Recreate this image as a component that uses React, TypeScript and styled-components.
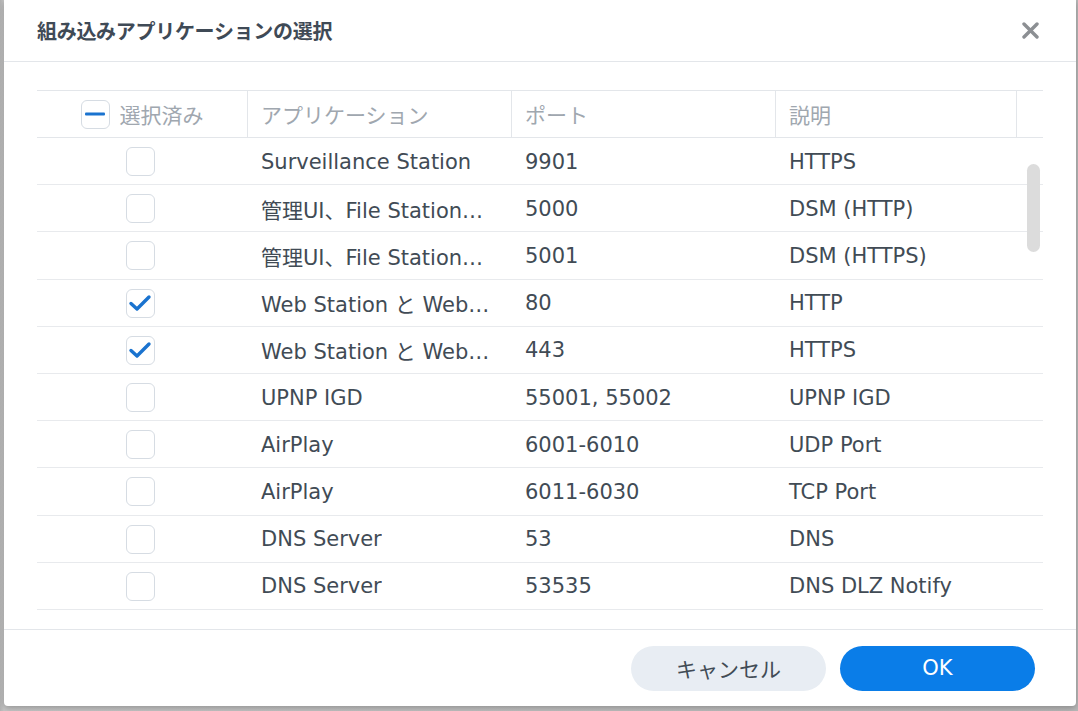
import styled, { createGlobalStyle } from 'styled-components';

const GlobalStyle = createGlobalStyle`
  html, body {
    margin: 0;
    padding: 0;
    height: 100%;
    overflow: hidden;
    background: #b9bcbf;
  }
  * {
    box-sizing: border-box;
  }
`;

const FONT = `"DejaVu Sans", "Noto Sans CJK JP", sans-serif`;

const Backdrop = styled.div`
  width: 1078px;
  height: 711px;
  padding: 0 2px 5px 4px;
  background: linear-gradient(90deg, #b3b3b3 0, #c6c6c6 4px, #b8b8b8 100%);
  font-family: ${FONT};
`;

const Dialog = styled.div`
  height: 706px;
  background: #fff;
  border-radius: 0 0 4px 4px;
  display: flex;
  flex-direction: column;
  box-shadow: 0 2px 6px rgba(0, 0, 0, 0.25);
`;

const TitleBar = styled.div`
  height: 62px;
  flex-shrink: 0;
  display: flex;
  align-items: center;
  justify-content: space-between;
  padding: 0 37px 0 33px;
  border-bottom: 1px solid #e3e6ea;
`;

const Title = styled.div`
  font-family: "Noto Sans CJK JP", sans-serif;
  font-size: 20px;
  font-weight: 700;
  color: #3f4a56;
  letter-spacing: -0.3px;
`;

const CloseButton = styled.button`
  width: 18px;
  height: 18px;
  border: none;
  padding: 0;
  background: none;
  display: flex;
  align-items: center;
  justify-content: center;
  cursor: pointer;
`;

const Body = styled.div`
  flex: 1;
  padding: 28px 33px 0 33px;
  position: relative;
`;

const Grid = styled.div`
  display: grid;
  grid-template-columns: 210px 264px 264px 241px 1fr;
`;

const HeadRow = styled(Grid)`
  height: 48px;
  border-top: 1px solid #e3e6ea;
  border-bottom: 1px solid #e3e6ea;
`;

const HeadCell = styled.div<{ $first?: boolean }>`
  display: flex;
  align-items: center;
  justify-content: ${({ $first }) => ($first ? 'center' : 'flex-start')};
  padding-left: ${({ $first }) => ($first ? '0' : '13px')};
  border-left: ${({ $first }) => ($first ? 'none' : '1px solid #e3e6ea')};
  gap: 10px;
  font-size: 21px;
  color: #a0a7af;
`;

const Row = styled(Grid)`
  height: 47.2px;
  border-bottom: 1px solid #e8eaed;
`;

const Cell = styled.div<{ $center?: boolean }>`
  display: flex;
  align-items: center;
  justify-content: ${({ $center }) => ($center ? 'center' : 'flex-start')};
  padding: 1px 18px 0 14px;
  font-size: 21px;
  color: #414b55;
  min-width: 0;
`;

const Ellipsis = styled.span`
  white-space: nowrap;
  overflow: hidden;
  text-overflow: ellipsis;
`;

const Box = styled.div`
  width: 29px;
  height: 29px;
  border: 1.5px solid #d6dce3;
  border-radius: 6px;
  background: #fff;
  display: flex;
  align-items: center;
  justify-content: center;
  flex-shrink: 0;
`;

const Scrollbar = styled.div`
  position: absolute;
  right: 36px;
  top: 102px;
  width: 13px;
  height: 88px;
  border-radius: 7px;
  background: #dcdcdc;
`;

const Footer = styled.div`
  height: 77px;
  flex-shrink: 0;
  border-top: 1px solid #e3e6ea;
  display: flex;
  align-items: center;
  justify-content: flex-end;
  gap: 14px;
  padding: 0 41px 0 0;
`;

const Button = styled.button<{ $primary?: boolean }>`
  width: 195px;
  height: 45px;
  border: none;
  border-radius: 23px;
  font-family: ${FONT};
  font-size: 21px;
  background: ${({ $primary }) => ($primary ? '#0a7de8' : '#e8edf3')};
  color: ${({ $primary }) => ($primary ? '#ffffff' : '#414b55')};
  cursor: pointer;
`;

const rows = [
  { checked: false, app: 'Surveillance Station', port: '9901', desc: 'HTTPS' },
  { checked: false, app: '管理UI、File Station、Audio Station', port: '5000', desc: 'DSM (HTTP)' },
  { checked: false, app: '管理UI、File Station、Audio Station', port: '5001', desc: 'DSM (HTTPS)' },
  { checked: true, app: 'Web Station と WebDAV Server', port: '80', desc: 'HTTP' },
  { checked: true, app: 'Web Station と WebDAV Server', port: '443', desc: 'HTTPS' },
  { checked: false, app: 'UPNP IGD', port: '55001, 55002', desc: 'UPNP IGD' },
  { checked: false, app: 'AirPlay', port: '6001-6010', desc: 'UDP Port' },
  { checked: false, app: 'AirPlay', port: '6011-6030', desc: 'TCP Port' },
  { checked: false, app: 'DNS Server', port: '53', desc: 'DNS' },
  { checked: false, app: 'DNS Server', port: '53535', desc: 'DNS DLZ Notify' },
];

const Check = () => (
  <svg width="24" height="20" viewBox="0 0 24 20">
    <path d="M3 10.5 L9 16 L21 4" fill="none" stroke="#1a73cf" strokeWidth="3.4" strokeLinecap="round" strokeLinejoin="round" />
  </svg>
);

const Minus = () => (
  <svg width="20" height="6" viewBox="0 0 20 6">
    <rect x="0" y="1.5" width="20" height="3" rx="1" fill="#1a73cf" />
  </svg>
);

const App = () => {
  return (
    <Backdrop>
      <GlobalStyle />
      <Dialog>
        <TitleBar>
          <Title>組み込みアプリケーションの選択</Title>
          <CloseButton>
            <svg width="17" height="17" viewBox="0 0 17 17">
              <path d="M2 2 L15 15 M15 2 L2 15" stroke="#8c8f93" strokeWidth="3.4" strokeLinecap="round" />
            </svg>
          </CloseButton>
        </TitleBar>
        <Body>
          <HeadRow>
            <HeadCell $first>
              <Box>
                <Minus />
              </Box>
              選択済み
            </HeadCell>
            <HeadCell>アプリケーション</HeadCell>
            <HeadCell>ポート</HeadCell>
            <HeadCell>説明</HeadCell>
            <HeadCell />
          </HeadRow>
          {rows.map((each, index) => (
            <Row key={index}>
              <Cell $center>
                <Box>{each.checked && <Check />}</Box>
              </Cell>
              <Cell>
                <Ellipsis>{each.app}</Ellipsis>
              </Cell>
              <Cell>{each.port}</Cell>
              <Cell>{each.desc}</Cell>
              <Cell />
            </Row>
          ))}
          <Scrollbar />
        </Body>
        <Footer>
          <Button>キャンセル</Button>
          <Button $primary>OK</Button>
        </Footer>
      </Dialog>
    </Backdrop>
  );
};

export default App;
